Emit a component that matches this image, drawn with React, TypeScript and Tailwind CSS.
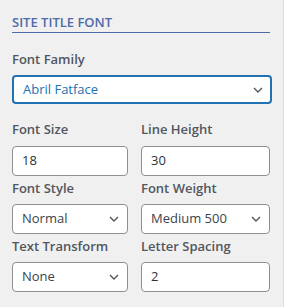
const font = { fontFamily: '"Open Sans", "Noto Sans", sans-serif' };

function Chevron() {
  return (
    <svg width="10" height="6" viewBox="0 0 10 6" className="shrink-0">
      <path d="M1 1l4 4 4-4" fill="none" stroke="#50575e" strokeWidth="1.4" />
    </svg>
  );
}

function Label({ children }: { children: string }) {
  return (
    <div className="h-[20px] text-[13px] font-semibold leading-[20px] text-[#50575e]">
      {children}
    </div>
  );
}

function TextBox({ value, w }: { value: string; w: string }) {
  return (
    <div
      className={`${w} flex h-[30px] items-center rounded-[4px] border border-[#8c8f94] bg-white px-[9px] text-[13px] text-[#2c3338]`}
    >
      {value}
    </div>
  );
}

function SelectBox({ value, w }: { value: string; w: string }) {
  return (
    <div
      className={`${w} flex h-[30px] items-center justify-between rounded-[4px] border border-[#8c8f94] bg-white pl-[9px] pr-[8px] text-[13px] text-[#3c434a]`}
    >
      <span>{value}</span>
      <Chevron />
    </div>
  );
}

export default function App() {
  return (
    <div className="flex h-[307px] w-[285px] bg-white" style={font}>
      <div className="h-full w-[284px] border-r border-[#dcdcde] bg-[#f0f0f1] pl-[12px] pr-[12px] pt-[15px]">
        <div className="w-[258px] border-b border-[#4f6aa8] pb-[2px] text-[13px] font-semibold uppercase leading-[15px] text-[#4f6aa8]">
          Site Title Font
        </div>

        <div className="mt-[16px]">
          <Label>Font Family</Label>
        </div>
        <div className="mt-[6px] flex h-[29px] w-[260px] items-center justify-between rounded-[4px] border-2 border-[#2271b1] bg-white pl-[9px] pr-[7px] text-[13px] text-[#2271b1]">
          <span>Abril Fatface</span>
          <Chevron />
        </div>

        <div className="mt-[15px] grid grid-cols-[129px_129px]">
          <Label>Font Size</Label>
          <Label>Line Height</Label>
        </div>
        <div className="mt-[7px] grid grid-cols-[129px_129px]">
          <TextBox value="18" w="w-[116px]" />
          <TextBox value="30" w="w-[129px]" />
        </div>

        <div className="mt-[2px] grid grid-cols-[129px_129px]">
          <Label>Font Style</Label>
          <Label>Font Weight</Label>
        </div>
        <div className="mt-[6px] grid grid-cols-[129px_129px]">
          <SelectBox value="Normal" w="w-[116px]" />
          <SelectBox value="Medium 500" w="w-[129px]" />
        </div>

        <div className="mt-[2px] grid grid-cols-[129px_129px]">
          <Label>Text Transform</Label>
          <Label>Letter Spacing</Label>
        </div>
        <div className="mt-[6px] grid grid-cols-[129px_129px]">
          <SelectBox value="None" w="w-[116px]" />
          <TextBox value="2" w="w-[129px]" />
        </div>
      </div>
    </div>
  );
}
